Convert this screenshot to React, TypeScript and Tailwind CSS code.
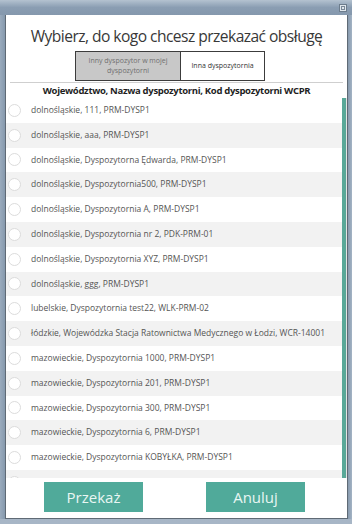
import React from 'react';

const rows = [
  'dolnośląskie, 111, PRM-DYSP1',
  'dolnośląskie, aaa, PRM-DYSP1',
  'dolnośląskie, Dyspozytorna Ędwarda, PRM-DYSP1',
  'dolnośląskie, Dyspozytornia500, PRM-DYSP1',
  'dolnośląskie, Dyspozytornia A, PRM-DYSP1',
  'dolnośląskie, Dyspozytornia nr 2, PDK-PRM-01',
  'dolnośląskie, Dyspozytornia XYZ, PRM-DYSP1',
  'dolnośląskie, ggg, PRM-DYSP1',
  'lubelskie, Dyspozytornia test22, WLK-PRM-02',
  'łódzkie, Wojewódzka Stacja Ratownictwa Medycznego w Łodzi, WCR-14001',
  'mazowieckie, Dyspozytornia 1000, PRM-DYSP1',
  'mazowieckie, Dyspozytornia 201, PRM-DYSP1',
  'mazowieckie, Dyspozytornia 300, PRM-DYSP1',
  'mazowieckie, Dyspozytornia 6, PRM-DYSP1',
  'mazowieckie, Dyspozytornia KOBYŁKA, PRM-DYSP1',
  '',
];

export default function App() {
  return (
    <div
      className="w-[352px] h-[524px] flex flex-col bg-gradient-to-b from-[#8d9fb3] to-[#a7b6c6] overflow-hidden"
      style={{ fontFamily: '"Open Sans", "Noto Sans", sans-serif' }}
    >
      {/* window frame top */}
      <div className="h-[15px] flex items-start justify-end pr-[5px] pt-[4px] bg-gradient-to-b from-[#b4c2d0] via-[#8a9db2] to-[#8598ad]">
        <div className="w-[8px] h-[8px] border border-[#6c7c8c] bg-[#dfe6ec] flex items-center justify-center">
          <div className="w-[4px] h-[4px] border border-[#7a8897]" />
        </div>
      </div>

      <div className="flex flex-1">
        <div className="w-[5px] bg-gradient-to-r from-[#9aabbd] to-[#8699ad]" />
        <div className="w-[343px] h-[504px] bg-white border-x border-b border-[#5f6a75] flex flex-col">
          <h1 className="pt-[9px] h-[36px] text-center text-[15.6px] leading-[24px] tracking-[-0.55px] text-[#383838] whitespace-nowrap">
            Wybierz, do kogo chcesz przekazać obsługę
          </h1>

          <div className="flex justify-center pr-[13px]">
            <div className="w-[106px] h-[30px] bg-[#c8c8c8] border border-[#3c3c3c] flex items-center justify-center text-center text-[7px] leading-[10px] text-[#707070] px-3">
              Inny dyspozytor w mojej dyspozytorni
            </div>
            <div className="w-[84px] h-[30px] bg-white border border-l-0 border-[#3c3c3c] flex items-center justify-center text-[7px] text-[#333]">
              Inna dyspozytornia
            </div>
          </div>

          <div className="mx-[4px] h-px bg-[#cfcfcf] mt-[1px]" />
          <div className="h-[15px] text-center text-[9.5px] leading-[15px] font-bold tracking-[-0.32px] text-[#1e1e1e] whitespace-nowrap">
            Województwo, Nazwa dyspozytorni, Kod dyspozytorni WCPR
          </div>

          <div className="flex h-[380px] overflow-hidden">
            <div className="flex-1 flex flex-col overflow-hidden">
              {rows.map((r, i) => (
                <div
                  key={i}
                  className={`h-[24.8px] shrink-0 flex items-center gap-[10px] pl-[2px] ${i % 2 === 1 ? 'bg-[#f2f2f2]' : 'bg-white'}`}
                >
                  <span className="w-[13px] h-[13px] rounded-full bg-white border border-[#dcdcdc] shrink-0" />
                  {r && <span className="text-[8.5px] text-[#555] whitespace-nowrap">{r}</span>}
                </div>
              ))}
            </div>
            <div className="w-[5px] bg-[#e4e4e4] flex">
              <div className="w-[4px] h-full bg-[#59a898]" />
            </div>
          </div>

          <div className="flex gap-[63px] pl-[38px] pt-[4px]">
            <button className="w-[99px] h-[30px] bg-[#50aa9a] text-[#e9f6f3] text-[15px]">Przekaż</button>
            <button className="w-[99px] h-[30px] bg-[#50aa9a] text-[#e9f6f3] text-[15px]">Anuluj</button>
          </div>
        </div>
        <div className="w-[4px] bg-gradient-to-r from-[#8699ad] to-[#a4b4c5]" />
      </div>

      <div className="h-[5px]" />
    </div>
  );
}
